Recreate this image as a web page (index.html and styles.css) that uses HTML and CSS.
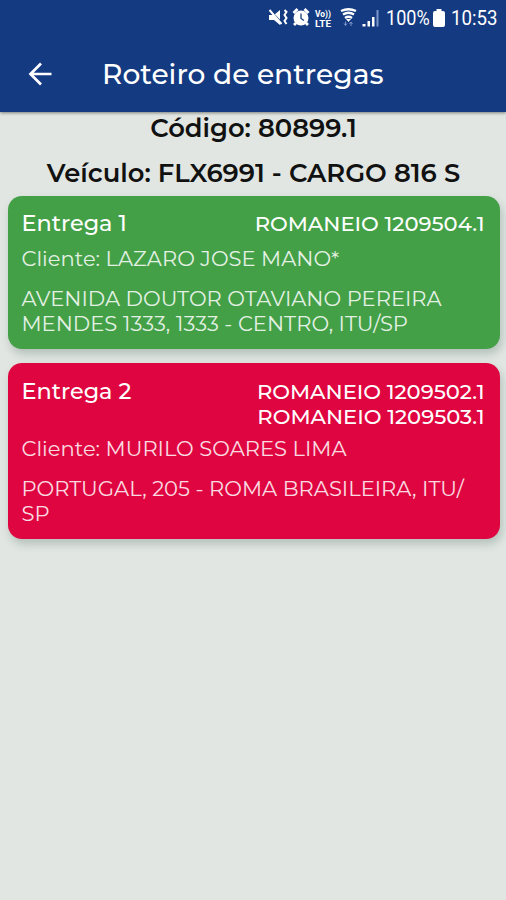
FILE: index.html
```html
<!DOCTYPE html>
<html lang="pt-BR">
<head>
<meta charset="utf-8">
<title>Roteiro de entregas</title>
<link rel="stylesheet" href="styles.css">
</head>
<body>
<header class="app-header">
  <div class="status-bar">
    <svg class="status-icons" width="114" height="24" viewBox="0 0 114 24" fill="#fff">
      <path d="M1 9h5l6-5v15l-6-5H1z"/>
      <path d="M2 4l13 14" stroke="#143a82" stroke-width="1.500"/>
      <path d="M1.500 4l12 14M16.500 4l2 2-2 3 2 3-2 3 2 3" fill="none" stroke="#fff" stroke-width="2"/>
      <circle cx="33" cy="12" r="7.500"/>
      <path d="M25.500 7l4-4M36.500 3l4 4M28 17l-2 2M38 17l2 2" stroke="#fff" stroke-width="2.800"/>
      <path d="M33 7.500v5l3 2" fill="none" stroke="#143a82" stroke-width="1.300"/>
      <text class="volte" x="47" y="11" textLength="16" lengthAdjust="spacingAndGlyphs">Vo))</text>
      <text class="volte" x="47" y="21" textLength="16" lengthAdjust="spacingAndGlyphs">LTE</text>
      <path d="M73 5q7.500-3.500 15 0M75 8.500q5.500-3.500 11 0M77 12q3.500-2.500 7 0" fill="none" stroke="#fff" stroke-width="2.300"/>
      <path d="M78 13h5l-2.500 3z"/>
      <path d="M77.500 15.500v4M76 17.500l1.500 2 1.500-2M83 20v-4M81.500 18l1.500-2 1.500 2" fill="none" stroke="#7b94c8"/>
      <path d="M94.500 18h3v2.500h-3zM99.500 15h2.500v5.500h-2.500zM104 11h2.500v9.500h-2.500z"/>
      <path d="M108.500 4h2v16.500h-2z" fill="#7b94c8"/>
    </svg>
    <span class="battery-level">100%</span>
    <svg class="battery" width="12" height="18" viewBox="0 0 12 18"><path d="M3.500 0h5v2H10q2 0 2 2v12q0 2-2 2H2q-2 0-2-2V4q0-2 2-2h1.500z" fill="#fff"/></svg>
    <span class="clock">10:53</span>
  </div>
  <div class="toolbar">
    <svg class="back" width="24" height="24" viewBox="0 0 24 24"><path d="M23.500 12H2.500M13 1.500L2.500 12 13 22.500" fill="none" stroke="#fff" stroke-width="2.700"/></svg>
    <h1 class="title">Roteiro de entregas</h1>
  </div>
</header>
<main class="route">
  <p class="summary">Código: 80899.1</p>
  <p class="summary">Veículo: FLX6991 - CARGO 816 S</p>
  <article class="card done">
    <div class="card-head"><h2>Entrega 1</h2>
      <div class="manifests">ROMANEIO 1209504.1</div></div>
    <p class="client">Cliente: LAZARO JOSE MANO*</p>
    <p class="address">AVENIDA DOUTOR OTAVIANO PEREIRA<br>MENDES 1333, 1333 - CENTRO, ITU/SP</p>
  </article>
  <article class="card pending">
    <div class="card-head"><h2>Entrega 2</h2>
      <div class="manifests">ROMANEIO 1209502.1<br>ROMANEIO 1209503.1</div></div>
    <p class="client">Cliente: MURILO SOARES LIMA</p>
    <p class="address">PORTUGAL, 205 - ROMA BRASILEIRA, ITU/<br>SP</p>
  </article>
</main>
</body>
</html>
```
FILE: styles.css
```css
* { box-sizing: border-box; }
body { margin: 0; min-height: 900px; background: #e1e6e2; font-family: Montserrat, Inter, sans-serif; }
h1, h2, p { margin: 0; }
.app-header { height: 112px; background: #143a82; color: #fff; box-shadow: 0 1px 3px rgba(0, 0, 0, .45); }
.status-bar { height: 36px; padding-right: 9px; display: flex; align-items: center; justify-content: flex-end; font: 20.5px/36px Roboto, sans-serif; }
.status-icons { margin-right: 4px; flex: none; }
.volte { font: bold 9.5px Roboto, sans-serif; }
.battery-level { width: 45px; transform: scaleX(.88); transform-origin: left; white-space: nowrap; }
.battery { margin: 0 6px 0 2px; flex: none; }
.clock { width: 46px; white-space: nowrap; transform: scaleX(.91); transform-origin: left; }
.toolbar { height: 76px; padding-left: 28px; display: flex; align-items: center; }
.title { margin-left: 50px; font-size: 28.1px; font-weight: 500; line-height: 36px; }
.route { padding: 0 6.5px 0 7.5px; }
.summary { height: 45px; line-height: 32px; text-align: center; font-size: 25.8px; font-weight: 600; color: #111; white-space: nowrap; }
.summary + .summary { height: 39px; }
.card { margin-bottom: 14px; padding: 14px 15px 15px 14px; border-radius: 14px; color: #fff; box-shadow: 2px 5px 8px rgba(80, 105, 95, .3); white-space: nowrap; }
.done { background: #43a047; height: 153px; }
.pending { background: #df0540; height: 176px; padding-top: 15px; }
.card-head { display: flex; justify-content: space-between; line-height: 25px; }
.card-head h2 { font-size: 22.4px; font-weight: 500; line-height: 27px; }
.manifests { padding-top: 1px; font-size: 21.1px; font-weight: 500; text-align: right; }
.client, .address { font-size: 21.07px; font-weight: 400; line-height: 25px; opacity: .85; }
.client { margin-top: 9px; }
.pending .client { margin-top: 7px; }
.address { margin-top: 15px; }
```
